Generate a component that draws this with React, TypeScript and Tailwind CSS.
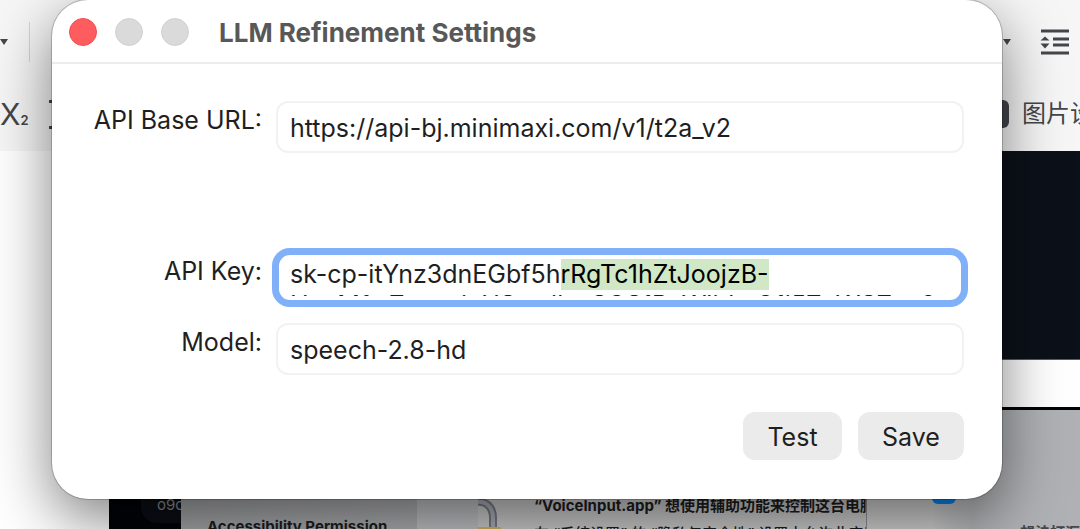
import React, { useEffect, useRef } from "react";

const API_KEY = "sk-cp-itYnz3dnEGbf5hrRgTc1hZtJoojzB-HuzMfwZmwcjcUSuwilnsSGS1PxWlirkvG1i5ZvWSZux9";
const SELECTED_FROM = "sk-cp-itYnz3dnEGbf5h".length;
const SELECTED_TO = API_KEY.indexOf("B-") + 2;

const LABEL = "text-right text-[25px] leading-[30px] whitespace-nowrap";
const FIELD =
  "w-full h-[52px] rounded-xl border-2 border-[#f2f2f2] bg-white px-3 pt-[2px] text-[25px] leading-[30px] outline-none";
const BUTTON = "h-12 rounded-xl bg-[#ebebeb] pt-px text-[25px] leading-[30px]";

const Caret: React.FC = () => (
  <span className="border-x-4 border-t-6 border-x-transparent border-t-[#44464c]" />
);

const EditorToolbar: React.FC = () => (
  <div className="h-[151px] bg-[#f6f6f7] pt-[22px] pr-[10px]">
    <div className="flex h-10 items-center justify-between">
      <div className="flex items-center gap-[21px]">
        <Caret />
        <span className="h-10 w-px bg-[#d5d5d7]" />
      </div>
      <div className="flex items-center gap-[29px]">
        <Caret />
        <svg width="30" height="28" viewBox="0 0 30 28" fill="currentColor">
          <path d="M1 1.500h28v3H1zM13 9.500h16v3H13zM13 15.500h16v3H13zM1 23.500h28v3H1zM0.500 12.500h9L5 8.500zM0.500 15.500h9l-4.500 5z" />
        </svg>
      </div>
    </div>
    <div className="mt-[36px] flex h-8 items-center justify-between">
      <div className="flex items-center">
        <span className="text-[30px] leading-8">X</span>
        <span className="pt-3 text-[13px] leading-4 font-semibold">2</span>
        <span className="ml-5 h-[29px] w-8 border-y-3 border-[#44464c]" />
      </div>
      <div className="flex w-[85px] items-center gap-[13px]">
        <span className="h-7 w-6 shrink-0 rounded-md bg-[#44464c]" />
        <span className="text-[24px] leading-[30px] whitespace-nowrap">图片设</span>
      </div>
    </div>
  </div>
);

/** Editor, browser and permission windows that lie underneath the dialog */
const Desktop: React.FC = () => (
  <div aria-hidden="true" className="absolute inset-0 overflow-hidden bg-white text-[#44464c]">
    <EditorToolbar />
    <div className="ml-auto h-[209px] w-1/6 border-b border-[#5e5867] bg-[#0c1119]" />

    <div className="absolute left-[109px] right-0 top-[407px] bottom-0 bg-[#010308] pt-5 pl-8">
      <div className="flex h-[96px] w-40 items-end rounded-2xl bg-[#0b0e15] pb-2 pl-4 text-[15px] leading-5 text-[#8a8c90]">
        o9o
      </div>
    </div>

    <div className="absolute left-[181px] right-0 top-[410px] bottom-0 flex bg-linear-to-r from-[#a4a5a8] via-[#b5b6b8] to-[#b0b1b4]">
      <div className="w-[236px] pt-[107px] pl-[26px] text-[15px] leading-5 font-bold whitespace-nowrap text-[#1d1d1f]">
        Accessibility Permission
      </div>
      <div className="w-[62px] bg-[#c6c9cc]/70" />
    </div>

    <div className="absolute left-[478px] top-[410px] bottom-0 flex w-[388px] overflow-hidden bg-[#cbcbcc] pt-[86px] text-[15px] leading-5 whitespace-nowrap text-[#1d1d1f]">
      <svg className="shrink-0" width="56" height="33" viewBox="0 0 56 33" fill="none">
        <path d="M-8 8C5 2 15 9 15 22v11" stroke="#777b84" strokeWidth="8" />
        <path d="M-8 8C5 2 15 9 15 22v11" stroke="#a9adb5" strokeWidth="4" />
        <path d="M0 32h23" stroke="#d5b45b" strokeWidth="2" />
      </svg>
      <div className="flex flex-col gap-2">
        <span className="font-bold">“VoiceInput.app” 想使用辅助功能来控制这台电脑</span>
        <span className="font-medium">在 “系统设置” 的 “隐私与安全性” 设置中允许此应用</span>
      </div>
    </div>

    <div className="absolute left-[866px] right-0 top-[410px] bottom-0 flex items-end border-l border-[#8f8f91] bg-linear-to-r from-[#d0d0d1] from-30% to-[#b0b1b4] to-50%">
      <span className="mb-[25px] ml-[65px] h-5 w-[26px] rounded-md bg-[#0a84ee]" />
      <span className="-mb-[14px] ml-[64px] text-[15px] leading-5 font-bold whitespace-nowrap">想法打汇</span>
    </div>
  </div>
);

export default function App() {
  const keyRef = useRef<HTMLTextAreaElement>(null);

  useEffect(() => {
    const el = keyRef.current;
    if (!el) return;
    el.focus();
    el.setSelectionRange(SELECTED_FROM, SELECTED_TO);
    el.scrollTop = 0;
  }, []);

  return (
    <div className="relative min-h-screen overflow-hidden pr-[78px] pb-[30px] pl-[52px] font-['Inter','Noto_Sans_CJK_SC',sans-serif] text-[#1f1f1f]">
      <Desktop />

      <main className="relative rounded-[36px] bg-white shadow-[0_0_0_1px_rgba(0,0,0,0.2),0_20px_60px_rgba(0,0,0,0.5)]">
        <header className="flex h-[64px] items-center border-b-2 border-[#ececec] pt-px pl-[17px]">
          <div className="flex gap-[18px]">
            <button aria-label="Close" className="size-7 rounded-full border border-[#f24e50] bg-[#ff5c5f]" />
            <button aria-label="Minimize" disabled className="size-7 rounded-full border border-[#d2d2d2] bg-[#dadada]" />
            <button aria-label="Zoom" disabled className="size-7 rounded-full border border-[#d2d2d2] bg-[#dadada]" />
          </div>
          <h1 className="ml-[30px] pt-[2px] text-[26px] leading-[30px] font-bold text-[#585858]">LLM Refinement Settings</h1>
        </header>

        <form className="px-[38px] pt-[37px] pb-[39px]" onSubmit={(e) => e.preventDefault()}>
          <div className="grid grid-cols-[172px_1fr] gap-x-[14px]">
            <label htmlFor="base-url" className={`${LABEL} pt-1`}>API Base URL:</label>
            <input id="base-url" className={FIELD} defaultValue="https://api-bj.minimaxi.com/v1/t2a_v2" />

            <label htmlFor="api-key" className={`${LABEL} mt-[95px] pt-2`}>API Key:</label>
            <div className="-mx-1 mt-[95px] h-[59px] rounded-[18px] border-7 border-[#7fb0f8] bg-white px-[11px] pt-1">
              <textarea
                id="api-key"
                ref={keyRef}
                spellCheck={false}
                defaultValue={API_KEY}
                className="block h-[37px] w-full resize-none overflow-hidden text-[25px] leading-[31px] outline-none selection:bg-[#d0e8c5] selection:text-black"
              />
            </div>

            <label htmlFor="model" className={`${LABEL} mt-4 pt-1`}>Model:</label>
            <input id="model" className={`${FIELD} mt-4`} defaultValue="speech-2.8-hd" />
          </div>

          <div className="mt-[37px] flex justify-end gap-4">
            <button type="button" className={`${BUTTON} w-[99px]`}>Test</button>
            <button type="submit" className={`${BUTTON} w-[106px]`}>Save</button>
          </div>
        </form>
      </main>
    </div>
  );
}
